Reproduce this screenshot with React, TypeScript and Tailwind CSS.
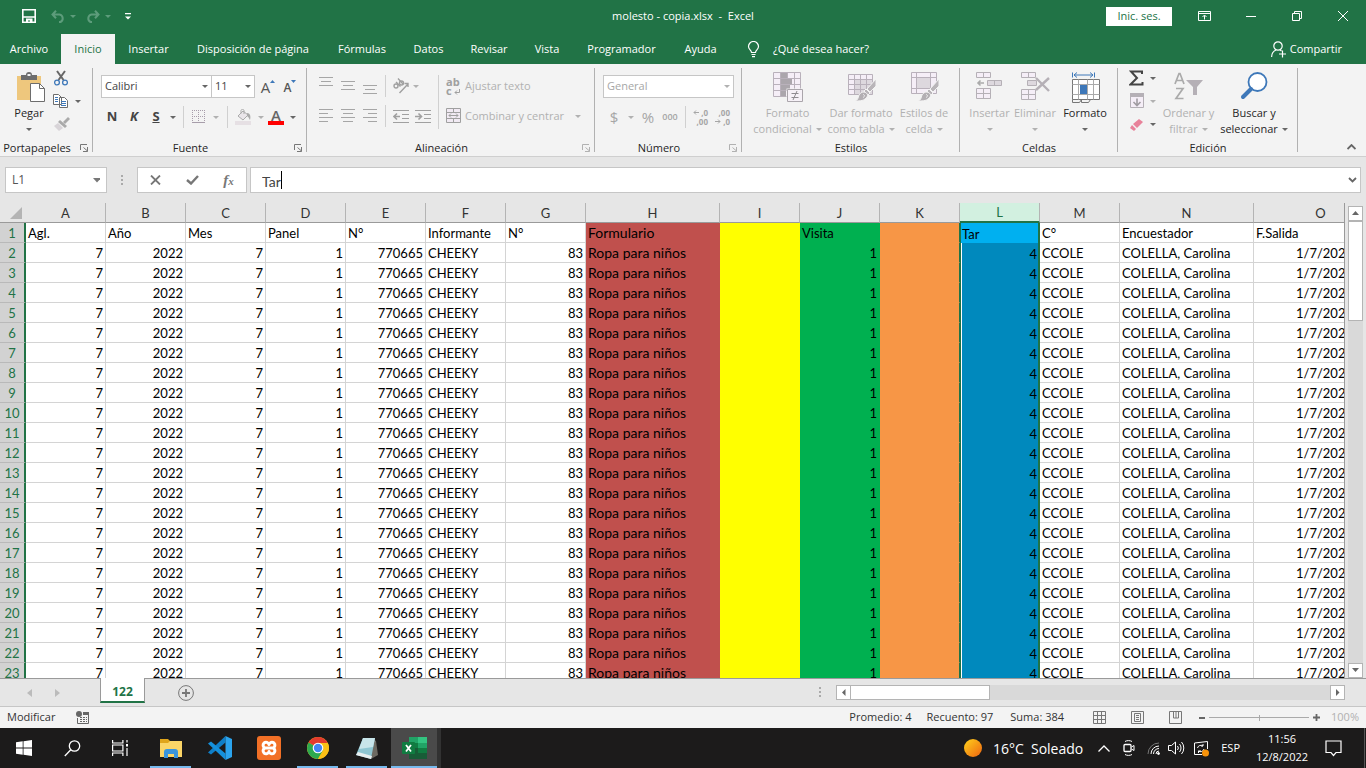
import { clsx } from "clsx";
import type { ReactNode } from "react";

type Column = {
  id: string;
  title: string;
  value: string;
  width: string;
  align?: "right";
  fill?: string;
};

const COLUMNS: Column[] = [
  { id: "A", title: "Agl.", value: "7", width: "w-20", align: "right" },
  { id: "B", title: "Año", value: "2022", width: "w-20", align: "right" },
  { id: "C", title: "Mes", value: "7", width: "w-20", align: "right" },
  { id: "D", title: "Panel", value: "1", width: "w-20", align: "right" },
  { id: "E", title: "N°", value: "770665", width: "w-20", align: "right" },
  { id: "F", title: "Informante", value: "CHEEKY", width: "w-20" },
  { id: "G", title: "N°", value: "83", width: "w-20", align: "right" },
  { id: "H", title: "Formulario", value: "Ropa para niños", width: "w-[134px]", fill: "bg-[#c0504d] border-[#c0504d] text-[14px]" },
  { id: "I", title: "", value: "", width: "w-20", fill: "bg-[#ffff00] border-[#ffff00]" },
  { id: "J", title: "Visita", value: "1", width: "w-20", align: "right", fill: "bg-[#00b050] border-[#00b050]" },
  { id: "K", title: "", value: "", width: "w-20", fill: "bg-[#f79646] border-b-[#f79646] border-r-[#217346]" },
  { id: "L", title: "Tar", value: "4", width: "w-20", align: "right" },
  { id: "M", title: "C°", value: "CCOLE", width: "w-20" },
  { id: "N", title: "Encuestador", value: "COLELLA, Carolina", width: "w-[134px]" },
  { id: "O", title: "F.Salida", value: "1/7/2022", width: "w-[134px]" },
];

const ROWS = Array.from({ length: 23 }, (_, i) => i + 1);

const TABS = [
  { name: "Insertar", width: "w-[67px]" },
  { name: "Disposición de página", width: "w-[142px]" },
  { name: "Fórmulas", width: "w-[76px]" },
  { name: "Datos", width: "w-[57px]" },
  { name: "Revisar", width: "w-[64px]" },
  { name: "Vista", width: "w-[52px]" },
  { name: "Programador", width: "w-[97px]" },
  { name: "Ayuda", width: "w-[61px]" },
];

function Caret({ className = "text-[#666]" }: { className?: string }) {
  return (
    <svg width="6" height="3" viewBox="0 0 6 3" className={clsx("inline-block shrink-0", className)} aria-hidden>
      <path d="M0 0h6L3 3z" fill="currentColor" />
    </svg>
  );
}

function Group({
  label,
  width,
  launcher,
  children,
}: {
  label: string;
  width: string;
  launcher?: string;
  children: ReactNode;
}) {
  return (
    <section className={clsx("relative flex h-[92px] shrink-0 flex-col", width)}>
      <div className="h-[76px]">{children}</div>
      <div className="flex h-4 items-center">
        <h2 className={clsx("flex-1 text-center", launcher && "pr-1.5")}>{label}</h2>
        {launcher ? (
          <button aria-label={`Opciones de ${label}`} className={clsx("mr-1", launcher)}>
            <svg width="9" height="8" viewBox="0 0 9 8" fill="none" stroke="currentColor">
              <path d="M.5 6V.5H7M3.5 3.5l4 3.500M7.500 3v4.500H3" />
            </svg>
          </button>
        ) : null}
      </div>
      <div className="absolute right-0 top-1 h-21 w-px bg-[#b1b1b1]" />
    </section>
  );
}

function Tool({
  label,
  className,
  children,
}: {
  label: string;
  className?: string;
  children: ReactNode;
}) {
  return (
    <button aria-label={label} className={clsx("flex h-[22px] shrink-0 items-center justify-center", className)}>
      {children}
    </button>
  );
}

function BigTool({
  icon,
  lines,
  className,
  enabled,
}: {
  icon: ReactNode;
  lines: [string, string?];
  className?: string;
  enabled?: boolean;
}) {
  return (
    <button
      className={clsx(
        "flex shrink-0 flex-col items-center pt-2 leading-4 whitespace-nowrap",
        enabled ? "text-[#262626]" : "text-[#b1b1b1]",
        className,
      )}
    >
      <span className="flex h-[33px] items-start">{icon}</span>
      <span>{lines[0]}</span>
      <span className="flex h-4 items-center gap-1">
        {lines[1]}
        <Caret className={enabled ? "text-[#666]" : "text-[#b1b1b1]"} />
      </span>
    </button>
  );
}

function Sep({ className = "h-[22px]" }: { className?: string }) {
  return <div className={clsx("w-px shrink-0 bg-[#d0d0d0]", className)} />;
}

// Stacked horizontal strokes; each entry is [x, length].
function Lines({ rows, width = 14 }: { rows: [number, number][]; width?: number }) {
  return (
    <svg width={width} height={rows.length * 4 - 2} fill="#a6a6a6">
      {rows.map(([x, w], i) => (
        <rect key={i} x={x} y={i * 4} width={w} height="1" />
      ))}
    </svg>
  );
}

function TitleBar() {
  return (
    <div className="grid h-8 grid-cols-[1fr_auto_1fr] items-center text-white">
      <div className="flex items-center pl-[22px]">
        <button aria-label="Guardar">
          <svg width="14" height="14" viewBox="0 0 14 14" fill="none" stroke="white" strokeWidth="1.6">
            <path d="M.8.8h12.4v12.4H.8zM1 8h12" />
            <path d="M4 9.500h6.500v4H8v-2H6v2H4z" fill="white" stroke="none" />
          </svg>
        </button>
        <button aria-label="Deshacer" className="ml-[15px] flex items-center gap-[5px] text-[#5d9c7b]">
          <svg width="14" height="13" viewBox="0 0 14 13" fill="none" stroke="currentColor" strokeWidth="2">
            <path d="M5 .7 1.500 4.500 5 8.300M2 4.500h6.500a4 4 0 0 1 1 7.500H8" />
          </svg>
          <Caret className="text-[#5d9c7b]" />
        </button>
        <button aria-label="Rehacer" className="ml-[10px] flex items-center gap-[5px] text-[#5d9c7b]">
          <svg width="14" height="13" viewBox="0 0 14 13" fill="none" stroke="currentColor" strokeWidth="2">
            <path d="m9 .7 3.500 3.800L9 8.300M12 4.500H5.500a4 4 0 0 0-1 7.500H6" />
          </svg>
          <Caret className="text-[#5d9c7b]" />
        </button>
        <button aria-label="Personalizar barra" className="ml-[14px]">
          <svg width="6" height="7" viewBox="0 0 6 7" fill="white">
            <path d="M0 0h6v1.300H0zM0 3.500h6l-3 3z" />
          </svg>
        </button>
      </div>
      <h1 className="whitespace-pre">molesto - copia.xlsx  -  Excel</h1>
      <div className="flex items-center justify-end pr-[18px]">
        <button className="mr-[26px] h-[19px] w-[66px] bg-white text-[#217346]">Inic. ses.</button>
        <button aria-label="Opciones de la cinta">
          <svg width="13" height="10" viewBox="0 0 13 10" fill="none" stroke="white">
            <path d="M.5.500h12v9H.5zM.5 2.500h12M6.500 8.500V4.500M4.500 6l2-2 2 2" />
          </svg>
        </button>
        <button aria-label="Minimizar" className="ml-[35px] h-px w-[10px] bg-white" />
        <button aria-label="Restaurar" className="ml-[36px]">
          <svg width="10" height="10" viewBox="0 0 10 10" fill="none" stroke="white">
            <path d="M.5 2.500h7v7h-7zM2.500 2.500v-2h7v7h-2" />
          </svg>
        </button>
        <button aria-label="Cerrar" className="ml-[36px]">
          <svg width="10" height="10" viewBox="0 0 10 10" fill="none" stroke="white">
            <path d="m0 0 10 10M10 0 0 10" />
          </svg>
        </button>
      </div>
    </div>
  );
}

function TabBar() {
  return (
    <nav className="mt-0.5 flex h-[30px] items-center text-white">
      <button className="w-[61px]">
        <span className="pr-[3px]">Archivo</span>
      </button>
      <button className="h-full w-[54px] bg-[#f3f3f3] text-[#217346]">Inicio</button>
      {TABS.map((t) => (
        <button key={t.name} className={clsx("shrink-0 whitespace-nowrap", t.width)}>
          {t.name}
        </button>
      ))}
      <button className="ml-4 flex items-center gap-[13px] whitespace-nowrap">
        <svg width="13" height="17" viewBox="0 0 13 17" fill="none" stroke="white" strokeWidth="1.200">
          <path d="M4.500 11.500C4.500 9 1.500 8.500 1.500 5.500a5 5 0 0 1 10 0c0 3-3 3.500-3 6zM4.500 13.500h4M5 15.700h3" />
        </svg>
        ¿Qué desea hacer?
      </button>
      <button className="ml-auto flex items-center gap-1 pr-6">
        <svg width="15" height="17" viewBox="0 0 15 17" fill="none" stroke="white" strokeWidth="1.200">
          <circle cx="7" cy="5" r="4.200" />
          <path d="M.6 16c0-3.500 2-6 4.400-7M9 9l1.500 1M11.500 9.500v7M8 13h7" />
        </svg>
        Compartir
      </button>
    </nav>
  );
}

function Clipboard() {
  return (
    <Group label="Portapapeles" width="w-[93px]" launcher="text-[#777]">
      <div className="flex">
        <BigTool
          enabled
          className="w-[58px]"
          lines={["Pegar"]}
          icon={
            <svg width="30" height="31" viewBox="0 0 30 31" className="ml-1">
              <path d="M1 4h24v24H1z" fill="#eec77d" />
              <path d="M5 3h5a3 3 0 0 1 6 0h5v5H5z" fill="#6d6d6d" />
              <rect x="11.500" y="2" width="3" height="2" fill="#f3f3f3" />
              <path d="M14.500 11.500h9l5 5v13h-14z" fill="white" stroke="#6d6d6d" />
              <path d="M23.500 11.500v5h5" fill="none" stroke="#6d6d6d" />
            </svg>
          }
        />
        <div className="flex flex-col gap-px pt-[3px]">
          <Tool label="Cortar" className="-ml-1 w-[17px] justify-start">
            <svg width="14" height="16" viewBox="0 0 14 16" fill="none">
              <path d="M3 1 9.500 10M11 1 4.500 10" stroke="#666" strokeWidth="2" />
              <circle cx="3" cy="12.500" r="2.400" stroke="#3e78b9" strokeWidth="1.300" />
              <circle cx="11" cy="12.500" r="2.400" stroke="#3e78b9" strokeWidth="1.300" />
            </svg>
          </Tool>
          <Tool label="Copiar" className="-ml-[5px] gap-[6px]">
            <svg width="16" height="14" viewBox="0 0 16 14" fill="white" stroke="#6d6d6d">
              <path d="M.5.500h5l3 3v7h-8zM6.500 3.500h5l3 3v7h-8z" />
              <path d="M2 3.500h3M2 5.500h3M2 7.500h3M8 7.500h5M8 9.500h5M8 11.500h5" stroke="#3e78b9" />
            </svg>
            <Caret />
          </Tool>
          <Tool label="Copiar formato" className="-ml-1 w-[17px] justify-start">
            <svg width="16" height="14" viewBox="0 0 16 14">
              <path d="M14 0 16 2l-5 5-2-2z" fill="#aaa" />
              <path d="m6 3 7 6-2 2-7-6z" fill="#aaa" />
              <path d="m4 6 5 5-4 3-5-5z" fill="#d8d4d8" />
            </svg>
          </Tool>
        </div>
      </div>
    </Group>
  );
}

function FontGroup() {
  return (
    <Group label="Fuente" width="w-[214px]" launcher="text-[#777]">
      <div className="flex flex-col gap-2 pt-[11px] pl-2">
        <div className="flex">
          <label className="relative flex items-center">
            <select aria-label="Fuente" className="h-[23px] w-[111px] appearance-none border border-[#c6c6c6] bg-white pl-[3px] text-[#444]">
              <option>Calibri</option>
            </select>
            <Caret className="absolute right-1 text-[#666]" />
          </label>
          <label className="relative flex items-center">
            <select aria-label="Tamaño" className="h-[23px] w-[43px] appearance-none border border-l-0 border-[#c6c6c6] bg-white pl-[3px] text-[#444]">
              <option>11</option>
            </select>
            <Caret className="absolute right-1 text-[#666]" />
          </label>
          <Tool label="Aumentar tamaño" className="ml-0.5 w-[22px]">
            <span className="pt-0.5 text-[15px] leading-4 font-medium text-[#555]">A</span>
            <svg width="5" height="3" className="mb-2.5" fill="#3e78b9">
              <path d="M0 3h5L2.500 0z" />
            </svg>
          </Tool>
          <Tool label="Disminuir tamaño" className="w-[22px]">
            <span className="pt-1 text-[12px] leading-3 font-semibold text-[#555]">A</span>
            <svg width="5" height="3" className="mb-2.5" fill="#3e78b9">
              <path d="M0 0h5L2.500 3z" />
            </svg>
          </Tool>
        </div>
        <div className="flex items-center text-[13px] font-bold text-[#444]">
          <Tool label="Negrita" className="w-[22px]">N</Tool>
          <Tool label="Cursiva" className="w-[22px] italic">K</Tool>
          <Tool label="Subrayado" className="w-[22px] underline">S</Tool>
          <Tool label="Más subrayados" className="w-3">
            <Caret />
          </Tool>
          <Sep className="ml-1 h-[22px]" />
          <Tool label="Bordes" className="ml-2 gap-[7px]">
            <svg width="14" height="14" viewBox="0 0 14 14" fill="none" stroke="#a79daa">
              <path d="M.5 0v12M6.500 0v12M12.500 0v12M0 .5h13M0 6.500h13" strokeDasharray="1 1" />
              <path d="M0 12.500h13" />
            </svg>
            <Caret className="text-[#b1b1b1]" />
          </Tool>
          <Sep className="ml-2 h-[22px]" />
          <Tool label="Color de relleno" className="ml-[7px] gap-1.5">
            <svg width="17" height="16" viewBox="0 0 17 16">
              <path d="m3 7 5-5 5 4-5 5z" fill="#eae6ea" stroke="#aaa" />
              <path d="M6 4.500V1.500c0-1.500 3-1.500 3 0V5" fill="none" stroke="#aaa" />
              <path d="M12 4c3 0 4 3 3 7-1-1-1-3-3-4z" fill="#aaa" />
              <path d="M0 12h16v4H0z" fill="#e6e0e4" />
            </svg>
            <Caret className="text-[#b1b1b1]" />
          </Tool>
          <Tool label="Color de fuente" className="ml-1 gap-1.5">
            <span className="flex w-4 flex-col items-center">
              <span className="h-3 text-[15px] leading-3 font-semibold text-[#666]">A</span>
              <span className="h-1 w-4 bg-[#ff0000]" />
            </span>
            <Caret />
          </Tool>
        </div>
      </div>
    </Group>
  );
}

function AlignGroup() {
  return (
    <Group label="Alineación" width="w-[288px]" launcher="text-[#b1b1b1]">
      <div className="flex pt-[11px] pl-2 text-[#b1b1b1]">
        <div className="flex flex-col gap-2">
          <div className="flex">
            <Tool label="Alinear arriba" className="w-[22px] pb-2">
              <Lines rows={[[0, 14], [2, 10], [0, 14]]} />
            </Tool>
            <Tool label="Alinear en medio" className="w-[22px]">
              <Lines rows={[[0, 14], [2, 10], [0, 14]]} />
            </Tool>
            <Tool label="Alinear abajo" className="w-[22px] pt-2">
              <Lines rows={[[0, 14], [2, 10], [0, 14]]} />
            </Tool>
            <Sep className="ml-1 h-[22px]" />
            <Tool label="Orientación" className="ml-[7px] gap-1">
              <svg width="16" height="16" viewBox="0 0 16 16" fill="none" stroke="#a0a0a0" strokeWidth="1.400">
                <circle cx="3" cy="8" r="2" />
                <path d="m3 4 4.500 4.500" />
                <circle cx="8.500" cy="5" r="2" />
                <path d="M5 .5 10 6M6.500 15 15 6M11.500 5.500H15V9" />
              </svg>
              <Caret className="text-[#b1b1b1]" />
            </Tool>
          </div>
          <div className="flex">
            <Tool label="Alinear a la izquierda" className="w-[22px]">
              <Lines rows={[[0, 14], [0, 9], [0, 14], [0, 9]]} />
            </Tool>
            <Tool label="Centrar" className="w-[22px]">
              <Lines rows={[[0, 14], [2, 10], [0, 14], [2, 10]]} />
            </Tool>
            <Tool label="Alinear a la derecha" className="w-[22px]">
              <Lines rows={[[0, 14], [5, 9], [0, 14], [5, 9]]} />
            </Tool>
            <Sep className="ml-1 h-[22px]" />
            <Tool label="Disminuir sangría" className="ml-[7px]">
              <svg width="16" height="13" viewBox="0 0 16 13" fill="none" stroke="#a0a0a0">
                <path d="M0 .5h16M9 4.500h7M9 8.500h7M0 12.500h16" />
                <path d="M7 6.500H1M4 3.500l-3 3 3 3" strokeWidth="1.600" />
              </svg>
            </Tool>
            <Tool label="Aumentar sangría" className="ml-[6px]">
              <svg width="16" height="13" viewBox="0 0 16 13" fill="none" stroke="#a0a0a0">
                <path d="M0 .5h16M9 4.500h7M9 8.500h7M0 12.500h16" />
                <path d="M0 6.500h6M3.500 3.500l3 3-3 3" strokeWidth="1.600" />
              </svg>
            </Tool>
          </div>
        </div>
        <Sep className="ml-[7px] h-[54px]" />
        <div className="ml-[7px] flex flex-col items-start gap-2">
          <Tool label="Ajustar texto" className="gap-[3px]">
            <span className="relative w-4 text-left text-[11px] leading-[9px] font-bold text-[#a0a0a0]">
              ab
              <br />c
              <svg width="6" height="6" viewBox="0 0 6 6" className="absolute right-0.5 bottom-0" fill="none" stroke="currentColor">
                <path d="M5.500 0v3.500H1M3 1.500l-2 2 2 2" />
              </svg>
            </span>
            Ajustar texto
          </Tool>
          <Tool label="Combinar y centrar" className="gap-[3px]">
            <svg width="16" height="16" viewBox="0 0 16 16" fill="#f1eaf3" stroke="#a0a0a0">
              <path d="M.5.500h14v14H.5zM.5 4.500h14M.5 10.500h14M7.500.500v4M7.500 10.500v4M3 7.500h9M5 5.500l-2 2 2 2M10 5.500l2 2-2 2" />
            </svg>
            Combinar y centrar
            <Caret className="ml-2 text-[#b1b1b1]" />
          </Tool>
        </div>
      </div>
    </Group>
  );
}

function NumberGroup() {
  return (
    <Group label="Número" width="w-[147px]" launcher="text-[#b1b1b1]">
      <div className="flex flex-col gap-2 pt-[11px] pl-2 text-[#a6a6a6]">
        <label className="relative flex w-[131px] items-center">
          <select aria-label="Formato de número" className="h-[23px] w-full appearance-none border border-[#c6c6c6] bg-white pl-[3px]">
            <option>General</option>
          </select>
          <Caret className="absolute right-1 text-[#b1b1b1]" />
        </label>
        <div className="flex items-center">
          <Tool label="Contabilidad" className="ml-1 w-[14px] text-[15px]">$</Tool>
          <Tool label="Más formatos" className="ml-1 w-3">
            <Caret className="text-[#b1b1b1]" />
          </Tool>
          <Tool label="Porcentaje" className="w-[22px] text-[15px]">%</Tool>
          <Tool label="Millares" className="w-[22px] text-[9px] font-semibold">000</Tool>
          <Sep className="ml-1 h-[22px]" />
          <Tool label="Aumentar decimales" className="ml-[7px]">
            <span className="relative flex w-[15px] flex-col text-right text-[8px] leading-[9px] font-bold">
              <span>,0</span>
              <span>,00</span>
              <svg width="6" height="5" viewBox="0 0 6 5" className="absolute top-0.5 left-0" fill="none" stroke="currentColor">
                <path d="M6 2.500H1M3 .5l-2 2 2 2" />
              </svg>
            </span>
          </Tool>
          <Tool label="Disminuir decimales" className="ml-[7px]">
            <span className="relative flex w-[15px] flex-col text-right text-[8px] leading-[9px] font-bold">
              <span>,00</span>
              <span>,0</span>
              <svg width="6" height="5" viewBox="0 0 6 5" className="absolute bottom-0.5 left-0" fill="none" stroke="currentColor">
                <path d="M0 2.500h5M3 .5l2 2-2 2" />
              </svg>
            </span>
          </Tool>
        </div>
      </div>
    </Group>
  );
}

function Brush() {
  return (
    <>
      <path d="M28 7v7l-6 6-3-3z" fill="#b9b5b9" stroke="#f3f3f3" />
      <path d="m18 17 4 4-2 2-4-4z" fill="#b9b5b9" stroke="#f3f3f3" />
      <path d="M16 20c4 1 5 4 1 7-2 2-6 2-10 2 3-1 3-3 4-6 1-2 3-3 5-3z" fill="#b3afb3" stroke="#f3f3f3" />
      <path d="M15 22.500c2 .5 2 2 0 3" fill="none" stroke="#f3f3f3" />
    </>
  );
}

function StylesGroup() {
  return (
    <Group label="Estilos" width="w-[218px]">
      <div className="flex pl-2">
        <BigTool
          className="w-[75px]"
          lines={["Formato", "condicional"]}
          icon={
            <svg width="30" height="30" viewBox="0 0 30 30" fill="none" stroke="#b9b1bb">
              <path d="M.5.500h27v24H.5z" fill="#f5eef7" />
              <path d="M7.500.500v24M14.500.500v24M21.500.500v24M.5 6.500h27M.5 12.500h27M.5 18.500h27" />
              <path d="M8 1h6v5H8zM8 7h11v5H8zM8 13h9v5H8zM8 19h5v5H8z" fill="#aba6ac" stroke="none" />
              <path d="M13.500 16.500h17v13h-17z" fill="#f3f3f3" stroke="none" />
              <path d="M14.500 17.500h15v12h-15z" fill="#f6f1f7" stroke="#aaa5ab" />
              <path d="M18.500 21.500h7M18.500 25.500h7M24 19l-4 9" stroke="#8f8b90" />
            </svg>
          }
        />
        <BigTool
          className="w-[72px]"
          lines={["Dar formato", "como tabla"]}
          icon={
            <svg width="30" height="31" viewBox="0 0 30 31" fill="none" className="ml-1">
              <path d="M.5 2.500h24v20H.5z" fill="#f5eef7" />
              <path d="M6.500 7.500h18v15h-18z" fill="#ddd8de" />
              <path d="M.5 2.500h24v20H.5zM6.500 2.500v20M12.500 2.500v20M18.500 2.500v20M.5 7.500h24M.5 12.500h24M.5 17.500h24" stroke="#b9b1bb" />
              <Brush />
            </svg>
          }
        />
        <BigTool
          className="w-[54px]"
          lines={["Estilos de", "celda"]}
          icon={
            <svg width="30" height="31" viewBox="0 0 30 31" fill="none" className="ml-1">
              <path d="M.5.500h25v21H.5z" fill="#f5eef7" />
              <path d="M5.500 5.500h14v11h-14z" fill="#ddd8de" />
              <path d="M.5.500h25v21H.5zM5.500.500v21M19.500.500v21M.5 5.500h25M.5 16.500h25" stroke="#b9b1bb" />
              <Brush />
            </svg>
          }
        />
      </div>
    </Group>
  );
}

function CellsGroup() {
  return (
    <Group label="Celdas" width="w-[158px]">
      <div className="flex pl-[7px]">
        <BigTool
          className="w-[45px]"
          lines={["Insertar"]}
          icon={
            <svg width="27" height="28" viewBox="0 0 27 28" fill="#f5eef7" stroke="#b5b0b6">
              <path d="M.5.500h14v5H.5zM7.500.500v5M.5 16.500h14v10H.5zM7.500 16.500v10M.5 21.500h14" />
              <path d="M11.500 8.500h14v5h-14zM18.500 8.500v5" fill="#ddd8de" />
              <path d="M8 11H2M4.500 8.500 2 11l2.500 2.500" fill="none" stroke="#aaa" strokeWidth="1.600" />
            </svg>
          }
        />
        <BigTool
          className="w-[46px]"
          lines={["Eliminar"]}
          icon={
            <svg width="30" height="28" viewBox="0 0 30 28" fill="#f5eef7" stroke="#b5b0b6" className="ml-0.5">
              <path d="M.5.500h14v5H.5zM7.500.500v5M.5 17.500h14v10H.5zM7.500 17.500v10M.5 22.500h14" />
              <path d="M6.500 8.500h9v5h-9z" fill="#ddd8de" />
              <path d="m15 6 13 13M28 6 15 18" fill="none" stroke="#b5b0b6" strokeWidth="2.400" />
            </svg>
          }
        />
        <BigTool
          enabled
          className="w-[54px]"
          lines={["Formato"]}
          icon={
            <svg width="29" height="31" viewBox="0 0 29 31" fill="none" stroke="#777">
              <path d="M1.500.500v5M23.500.500v5M3 3h19M6 .5 3 3l3 2.500M19 .5 22 3l-3 2.500" stroke="#3e78b9" />
              <path d="M1.500 7.500h27v20h-27z" fill="white" />
              <path d="M7.500 7.500v20M16.500 7.500v20M22.500 7.500v20M1.500 12.500h27M1.500 22.500h27" stroke="#aaa" />
              <path d="M9 13h7v9H9z" fill="#3e78b9" stroke="none" />
              <path d="M1.500 27.500v3h7l2-3v3h7l2-3" />
            </svg>
          }
        />
      </div>
    </Group>
  );
}

function EditGroup() {
  return (
    <Group label="Edición" width="w-[180px]">
      <div className="flex pl-[11px]">
        <div className="flex flex-col items-start gap-px pt-[3px]">
          <Tool label="Autosuma" className="gap-[6px]">
            <svg width="15" height="16" viewBox="0 0 15 16" fill="none" stroke="#444" strokeWidth="2">
              <path d="M13 4V1.500H2L8 8l-6.500 6.500H13.500V12" />
            </svg>
            <Caret />
          </Tool>
          <Tool label="Rellenar" className="gap-[6px]">
            <svg width="15" height="16" viewBox="0 0 15 16" fill="none" stroke="#b5b0b6">
              <path d="M1.500.500h13v14h-13z" fill="#f5eef7" />
              <path d="M1 0h14v4H1z" fill="#b5b0b6" stroke="none" />
              <path d="M8 5.500v7M4.500 9 8 12.500 11.500 9" stroke="#a09ca1" strokeWidth="1.600" />
            </svg>
            <Caret className="text-[#b1b1b1]" />
          </Tool>
          <Tool label="Borrar" className="gap-[6px]">
            <svg width="15" height="13" viewBox="0 0 15 13">
              <path d="m10 1 4 3-6 6-4-4z" fill="#e8829a" />
              <path d="m3 7 4 4-2 2-4-3z" fill="#e8829a" />
            </svg>
            <Caret />
          </Tool>
        </div>
        <BigTool
          className="w-[65px]"
          lines={["Ordenar y", "filtrar"]}
          icon={
            <svg width="30" height="28" viewBox="0 0 30 28" fill="none" stroke="#aaa" strokeWidth="1.700">
              <path d="m1 12 4-10.500h1L10 12M2.500 8.500h6M2 16.500h7L2 26.500h7.500" />
              <path d="M12 8h17l-6 7v8h-4v-8z" fill="#b5b0b6" stroke="none" />
            </svg>
          }
        />
        <BigTool
          enabled
          className="w-[66px]"
          lines={["Buscar y", "seleccionar"]}
          icon={
            <svg width="28" height="28" viewBox="0 0 28 28" fill="none" stroke="#3e78b9">
              <circle cx="17.500" cy="10" r="9" fill="white" strokeWidth="1.800" />
              <path d="m11 17-8 8" strokeWidth="4" strokeLinecap="round" />
            </svg>
          }
        />
      </div>
    </Group>
  );
}

function Ribbon() {
  return (
    <div className="flex h-[93px] border-b border-[#cfcfcf] bg-[#f3f3f3]">
      <Clipboard />
      <FontGroup />
      <AlignGroup />
      <NumberGroup />
      <StylesGroup />
      <CellsGroup />
      <EditGroup />
      <button aria-label="Contraer la cinta" className="mt-auto mr-[10px] mb-1.5 ml-auto">
        <svg width="9" height="6" viewBox="0 0 9 6" fill="none" stroke="#666" strokeWidth="1.800">
          <path d="m.5 5 4-4 4 4" />
        </svg>
      </button>
    </div>
  );
}

function Dots() {
  return (
    <svg width="2" height="11" fill="#aaa">
      <path d="M0 0h2v2H0zM0 4h2v2H0zM0 8h2v2H0z" />
    </svg>
  );
}

function FormulaBar() {
  return (
    <div className="flex h-[46px] items-start bg-[#e6e6e6] pt-[10px] pr-[5px] pl-[5px]">
      <label className="flex h-[26px] w-[102px] items-center border border-[#c6c6c6] bg-white pr-1.5">
        <input aria-label="Cuadro de nombres" defaultValue="L1" className="w-full pl-1.5 text-[12px] text-[#555] outline-none" />
        <svg width="8" height="5" fill="#777">
          <path d="M0 0h8L4 4.500z" />
        </svg>
      </label>
      <div className="flex h-[26px] w-[30px] items-center justify-center">
        <Dots />
      </div>
      <div className="flex h-[26px] w-[110px] items-center justify-around border border-[#c6c6c6] bg-white text-[#777]">
        <button aria-label="Cancelar">
          <svg width="11" height="10" viewBox="0 0 11 10" fill="none" stroke="currentColor" strokeWidth="1.800">
            <path d="m1 .5 9 9M10 .5l-9 9" />
          </svg>
        </button>
        <button aria-label="Introducir">
          <svg width="13" height="10" viewBox="0 0 13 10" fill="none" stroke="currentColor" strokeWidth="2.400">
            <path d="m1 5 4 3.500L12 1" />
          </svg>
        </button>
        <button aria-label="Insertar función" className="font-['Liberation_Serif',serif] text-[15px] leading-4 font-bold italic">
          f<span className="text-[11px]">x</span>
        </button>
      </div>
      <label className="ml-[3px] flex h-[26px] flex-1 items-center border border-[#c6c6c6] bg-white pr-[3px] pl-[11px]">
        <input
          aria-label="Barra de fórmulas"
          defaultValue="Tar"
          className="field-sizing-content pt-0.5 font-[Lato,sans-serif] text-[14px] text-[#444] outline-none"
        />
        <span className="h-[18px] w-px bg-black" />
        <svg width="9" height="6" viewBox="0 0 9 6" fill="none" stroke="#666" strokeWidth="1.800" className="ml-auto">
          <path d="m1 1 3.500 3.500L8 1" />
        </svg>
      </label>
    </div>
  );
}

function Cell({ col, row }: { col: Column; row: number }) {
  const title = row === 1;
  const selected = col.id === "L";
  return (
    <td
      className={clsx(
        "h-5 overflow-hidden pt-px pb-0 whitespace-nowrap",
        col.id === "O" && !title ? "pl-[42px]" : selected ? "px-px" : "px-[2px]",
        col.align && !title ? "text-right" : "text-left",
        selected && "border-r-2 border-l border-[#217346]",
        selected && (title ? "bg-[#00b0f0]" : "bg-[#0089bd] shadow-[inset_1px_0_white]"),
        !selected && "border-r border-b",
        !selected && (col.fill ?? "border-[#d4d4d4] bg-white"),
      )}
    >
      {title ? col.title : col.value}
    </td>
  );
}

function Sheet() {
  return (
    <div className="flex h-[475px] bg-[#e6e6e6] pr-[3px]">
      <div className="relative flex-1 overflow-hidden border-r border-[#9a9a9a]">
        <table className="w-[1388px] table-fixed border-separate border-spacing-0 font-[Lato,sans-serif] text-[13px] leading-[18px] text-black">
          <thead>
            <tr>
              <th className="h-5 w-[26px] border-b border-[#9a9a9a] p-0">
                <svg width="12" height="12" className="ml-[10px]" fill="#b4b4b4">
                  <path d="M12 0v12H0z" />
                </svg>
              </th>
              {COLUMNS.map((c) => (
                <th
                  key={c.id}
                  className={clsx(
                    "border-r border-r-[#b4b4b4] p-0 font-normal",
                    c.width,
                    c.id === "L"
                      ? "border-b-2 border-b-[#217346] bg-[#d2f0e0] text-[#217346]"
                      : "border-b border-b-[#9a9a9a] text-[#333]",
                  )}
                >
                  {c.id}
                </th>
              ))}
            </tr>
          </thead>
          <tbody>
            {ROWS.map((r) => (
              <tr key={r}>
                <th className="h-5 border-r-2 border-b border-r-[#217346] border-b-[#b9b9b9] bg-[#d2d2d2] p-0 pt-px text-center font-normal text-[#217346]">
                  {r}
                </th>
                {COLUMNS.map((c) => (
                  <Cell key={c.id} col={c} row={r} />
                ))}
              </tr>
            ))}
          </tbody>
        </table>
      </div>
      <div className="ml-[3px] flex w-[15px] flex-col pt-[3px]">
        <ScrollButton label="Arriba" path="M0 4h7L3.500 0z" />
        <div className="h-[100px] border border-[#b4b4b4] bg-white" />
        <div className="flex-1 bg-[#d9d9d9]" />
        <ScrollButton label="Abajo" path="M0 0h7L3.500 4z" />
      </div>
    </div>
  );
}

function ScrollButton({ label, path }: { label: string; path: string }) {
  return (
    <button aria-label={label} className="flex h-[15px] w-[15px] shrink-0 items-center justify-center border border-[#b4b4b4] bg-white">
      <svg width="7" height="7" viewBox="0 -1 7 7" fill="#666">
        <path d={path} />
      </svg>
    </button>
  );
}

function SheetTabs() {
  return (
    <div className="flex h-[28px] items-start bg-[#e6e6e6]">
      <div className="flex h-full w-[100px] items-center gap-[23px] border-t border-[#9a9a9a] pl-[27px]">
        <button aria-label="Hoja anterior">
          <svg width="5" height="8" fill="#bbb">
            <path d="M5 0v8L0 4z" />
          </svg>
        </button>
        <button aria-label="Hoja siguiente">
          <svg width="5" height="8" fill="#bbb">
            <path d="M0 0v8l5-4z" />
          </svg>
        </button>
      </div>
      <button className="h-[25px] w-[45px] border-x border-b-2 border-x-[#9a9a9a] border-b-[#217346] bg-white pt-1 text-[12px] leading-4 font-bold text-[#217346]">
        122
      </button>
      <div className="flex h-full flex-1 items-center border-t border-[#9a9a9a] pr-[21px] pl-[33px]">
        <button aria-label="Hoja nueva">
          <svg width="16" height="16" viewBox="0 0 16 16" fill="none" stroke="#777">
            <circle cx="8" cy="8" r="7.400" />
            <path d="M8 4v8M4 8h8" strokeWidth="1.800" />
          </svg>
        </button>
        <div className="mr-[15px] ml-auto">
          <Dots />
        </div>
        <div className="flex w-[509px] bg-[#d9d9d9]">
          <ScrollButton label="Izquierda" path="M5.500-1v7L2 2.500z" />
          <div className="h-[15px] w-[139px] border border-l-0 border-[#b4b4b4] bg-white" />
          <div className="flex-1" />
          <ScrollButton label="Derecha" path="M2-1v7l3.500-3.500z" />
        </div>
      </div>
    </div>
  );
}

function StatusBar() {
  return (
    <div className="flex h-[22px] items-center border-t border-[#c6c6c6] bg-[#f3f3f3] pr-[7px] pl-[7px] whitespace-nowrap text-[#333]">
      <span className="w-[69px]">Modificar</span>
      <svg width="13" height="13" viewBox="0 0 13 13" fill="#666">
        <circle cx="3" cy="3" r="3" />
        <path d="M7 1h6v3H7z" />
        <path d="M1.500 7v5.500h11V4M4 6.500h2M7 6.500h2M10 6.500h1M4 8.500h2M7 8.500h2M10 8.500h1M4 10.500h2M7 10.500h2M10 10.500h1" fill="none" stroke="#666" />
      </svg>
      <span className="mr-[15px] ml-auto">Promedio: 4</span>
      <span className="mr-[17px]">Recuento: 97</span>
      <span className="mr-[29px]">Suma: 384</span>
      <button aria-label="Normal">
        <svg width="13" height="13" viewBox="0 0 13 13" fill="none" stroke="#777">
          <path d="M.5.500h12v12H.5zM4.500.500v12M8.500.500v12M.5 4.500h12M.5 8.500h12" />
        </svg>
      </button>
      <button aria-label="Diseño de página" className="ml-[25px]">
        <svg width="13" height="13" viewBox="0 0 13 13" fill="none" stroke="#777">
          <path d="M.5.500h12v12H.5zM3.500 2.500h6v8h-6zM5 4.500h3M5 6.500h3M5 8.500h3" />
        </svg>
      </button>
      <button aria-label="Salto de página" className="ml-[25px]">
        <svg width="13" height="13" viewBox="0 0 13 13" fill="none" stroke="#777">
          <path d="M.5.500h12v12H.5zM4.500.500v6.500h5V.5M7 .5V7" />
        </svg>
      </button>
      <button aria-label="Alejar" className="ml-[17px] h-[2px] w-1.5 bg-[#666]" />
      <div className="ml-1 flex h-2 w-[100px] items-center justify-center bg-[linear-gradient(#aaa,#aaa)] bg-[length:100%_1px] bg-center bg-no-repeat">
        <span className="h-1.5 w-px bg-[#aaa]" />
      </div>
      <button aria-label="Acercar" className="mr-[11px] ml-1">
        <svg width="7" height="7" stroke="#666" strokeWidth="1.800">
          <path d="M3.500 0v7M0 3.500h7" />
        </svg>
      </button>
      <span className="text-[#b1b1b1]">100%</span>
    </div>
  );
}

function TaskButton({
  label,
  className,
  line,
  children,
}: {
  label: string;
  className?: string;
  line?: string;
  children: ReactNode;
}) {
  return (
    <button aria-label={label} className={clsx("relative flex h-full items-center justify-center", className ?? "w-[49px]")}>
      {children}
      {line ? <span className={clsx("absolute bottom-0 h-0.5 bg-[#76b9ed]", line)} /> : null}
    </button>
  );
}

function Taskbar() {
  return (
    <footer className="flex h-10 items-center bg-[#1c1b1b] text-white">
      <TaskButton label="Inicio" className="w-12">
        <svg width="16" height="16" viewBox="0 0 16 16" fill="white">
          <path d="M0 2.200 6.700 1.300v6.300H0zM7.500 1.200 16 0v7.600H7.500zM0 8.400h6.700v6.300L0 13.800zM7.500 8.400H16V16l-8.500-1.200z" />
        </svg>
      </TaskButton>
      <TaskButton label="Buscar" className="w-12">
        <svg width="17" height="17" viewBox="0 0 17 17" fill="none" stroke="white" strokeWidth="1.300">
          <circle cx="10.500" cy="6" r="5.200" />
          <path d="m6.800 9.800-6 6.200" />
        </svg>
      </TaskButton>
      <TaskButton label="Vista de tareas" className="mr-0.5 w-12">
        <svg width="17" height="16" viewBox="0 0 17 16" fill="none" stroke="white" strokeWidth="1.200">
          <path d="M.6 0v3h10.300V0M.6 5h10.300v6H.6zM.6 16v-3h10.300v3M15 0v2.500M15 8v8" />
          <path d="M14 4h2v2.500h-2z" fill="white" stroke="none" />
        </svg>
      </TaskButton>
      <TaskButton label="Explorador" line="inset-x-1">
        <svg width="22" height="19" viewBox="0 0 22 19">
          <path d="M0 0h8l2 2h11v6H0z" fill="#e0a51b" />
          <path d="M0 4h8l2-2h12v16H0z" fill="#fbd567" />
          <path d="M4 19v-6a3 3 0 0 1 3-3h8a3 3 0 0 1 3 3v6h-4v-4H8v4z" fill="#3a95dc" />
        </svg>
      </TaskButton>
      <TaskButton label="Visual Studio Code">
        <svg width="24" height="24" viewBox="0 0 24 24">
          <path d="M17.500 0v6.500L3 18.500 0 16.500z" fill="#0f7fc8" />
          <path d="M17.500 24v-6.500L3 5.500 0 7.500z" fill="#1590db" />
          <path d="M17.500 0 24 3v18l-6.500 3z" fill="#2ba4ee" />
        </svg>
      </TaskButton>
      <TaskButton label="XAMPP">
        <svg width="24" height="24" viewBox="0 0 24 24" fill="none">
          <rect width="24" height="24" rx="3" fill="#f27026" />
          <path d="M8 12h8M8 12a3 3 0 1 1 4-3.500A3 3 0 1 1 16 12a3 3 0 1 1-4 3.500A3 3 0 1 1 8 12z" stroke="white" strokeWidth="3" strokeLinejoin="round" />
        </svg>
      </TaskButton>
      <TaskButton label="Chrome" line="inset-x-1">
        <svg width="22" height="22" viewBox="0 0 22 22">
          <circle cx="11" cy="11" r="11" fill="#fbc116" />
          <path d="M11 11 1.500 5.500A11 11 0 0 1 20.500 5.500z" fill="#e33b2e" />
          <path d="M1.500 5.500A11 11 0 0 0 11 22l5-8.500L11 11z" fill="#2da94f" />
          <path d="M11 6h9.800A11 11 0 0 1 11 22l5-8.500z" fill="#fbc116" />
          <circle cx="11" cy="11" r="5.300" fill="white" />
          <circle cx="11" cy="11" r="4.200" fill="#4285f4" />
        </svg>
      </TaskButton>
      <TaskButton label="Bloc de notas" line="inset-x-1">
        <svg width="23" height="23" viewBox="0 0 23 23">
          <path d="m18 2 3 2 2 14-7 4z" fill="#6d6a62" />
          <path d="M8 1h12l-4 21-15-4z" fill="#8fc7d3" />
          <path d="M8 1h12l-2 9L4 12z" fill="#c8e5ea" />
          <path d="m1 18 15 4 1-3-14-4z" fill="#e9f0f1" />
        </svg>
      </TaskButton>
      <TaskButton label="Excel" className="w-[50px] border-r-4 border-[#323232] bg-[#4a4a4a]" line="inset-x-0">
        <svg width="25" height="22" viewBox="0 0 25 22">
          <path d="M7 0h9v6H7z" fill="#21a366" />
          <path d="M16 0h9v6h-9z" fill="#33c481" />
          <path d="M7 6h9v5H7z" fill="#107c41" />
          <path d="M16 6h9v5h-9z" fill="#21a366" />
          <path d="M7 11h9v11H7z" fill="#185c37" />
          <path d="M16 11h9v5h-9z" fill="#107c41" />
          <path d="M16 16h9v6h-9z" fill="#185c37" />
          <rect y="5" width="13" height="12" rx="1" fill="#107c41" />
          <path d="m4 8 5 6.500M9 8l-5 6.500" stroke="white" strokeWidth="1.800" />
        </svg>
      </TaskButton>
      <div className="ml-auto flex items-center whitespace-nowrap">
        <button className="flex items-center gap-2.5 text-[14px]">
          <svg width="20" height="20" viewBox="0 0 20 20">
            <defs>
              <linearGradient id="sun" x1="0" y1="0" x2="1" y2="1">
                <stop stopColor="#ffd21c" />
                <stop offset="1" stopColor="#ee6410" />
              </linearGradient>
            </defs>
            <circle cx="10" cy="10" r="9" fill="url(#sun)" />
          </svg>
          <span className="whitespace-pre">16°C  Soleado</span>
        </button>
        <button aria-label="Iconos ocultos" className="ml-[15px]">
          <svg width="12" height="7" viewBox="0 0 12 7" fill="none" stroke="white" strokeWidth="1.300">
            <path d="m.5 6.500 5.500-5.500 5.500 5.500" />
          </svg>
        </button>
        <svg width="12" height="16" viewBox="0 0 12 16" fill="none" stroke="white" className="ml-[13px]">
          <path d="M2 1.500C4 .3 7 .3 9 1.500M2 14.500c2 1.200 5 1.200 7 0" />
          <rect x="1" y="4.500" width="7" height="7" rx="1" strokeWidth="1.300" />
          <path d="M8.500 7 11 5.500v5L8.500 9" />
        </svg>
        <svg width="13" height="13" viewBox="0 0 13 13" fill="none" stroke="white" className="ml-3">
          <path d="M1 12A11 11 0 0 1 12 1" stroke="#777" />
          <path d="M4 12a8 8 0 0 1 8-8M6.500 12A5.500 5.500 0 0 1 12 6.500M9 12a3 3 0 0 1 3-3" />
          <circle cx="11.500" cy="11.500" r="1" fill="white" />
        </svg>
        <svg width="17" height="14" viewBox="0 0 17 14" fill="none" stroke="white" className="ml-2">
          <path d="M.5 4.500h3l4-3.500v12l-4-3.500h-3zM9.500 5a3 3 0 0 1 0 4M11.500 3a6 6 0 0 1 0 8M13.500 1a9 9 0 0 1 0 12" />
        </svg>
        <svg width="17" height="17" viewBox="0 0 17 17" fill="none" stroke="white" className="ml-2">
          <path d="M9 14.500H1.500V3l13-1.500V9M4.500 8A3.500 3.500 0 0 1 10 6V4M10 6H8M11 9a3.500 3.500 0 0 1-5.500 2v2M5.500 11H8" />
          <circle cx="12.500" cy="13" r="3.500" fill="#f7930a" stroke="none" />
        </svg>
        <button className="ml-[11px]">ESP</button>
        <button className="ml-[15px] flex w-[54px] flex-col items-center leading-[18px]">
          <span>11:56</span>
          <span>12/8/2022</span>
        </button>
        <button aria-label="Notificaciones" className="ml-[16px]">
          <svg width="17" height="17" viewBox="0 0 17 17" fill="none" stroke="white" strokeWidth="1.200">
            <path d="M1 1h15v11.500h-5L8.500 15.500 6 12.500H1z" />
          </svg>
        </button>
        <div className="mr-px ml-[22px] h-10 w-px bg-[#555]" />
      </div>
    </footer>
  );
}

export default function App() {
  return (
    <div className="overflow-hidden bg-[#e6e6e6] font-['Open_Sans','Noto_Sans',sans-serif] text-[11px] text-[#262626]">
      <header className="bg-[#217346]">
        <TitleBar />
        <TabBar />
      </header>
      <Ribbon />
      <FormulaBar />
      <Sheet />
      <SheetTabs />
      <StatusBar />
      <Taskbar />
    </div>
  );
}
